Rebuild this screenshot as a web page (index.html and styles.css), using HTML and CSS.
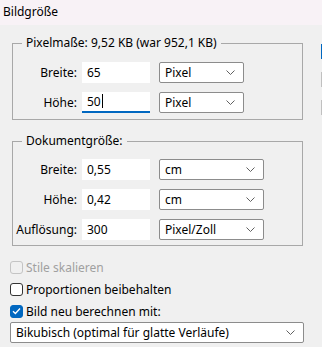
FILE: index.html
```
<!DOCTYPE html>
<html lang="de">
<head>
  <meta charset="UTF-8">
  <title>Bildgröße</title>
  <link rel="stylesheet" href="styles.css">
</head>
<body>
  <div class="titlebar">Bildgröße</div>

  <div class="dialog">
    <div class="main">
      <!-- Pixelmaße -->
      <fieldset class="group group-pixel">
        <legend>Pixelmaße: 9,52 KB (war 952,1 KB)</legend>
        <div class="row">
          <label class="lbl">Breite:</label>
          <div class="field">65</div>
          <div class="select">Pixel <svg class="chev" width="9" height="5" viewBox="0 0 9 5"><path d="M0.5 0.5 L4.5 4.5 L8.5 0.5"/></svg></div>
        </div>
        <div class="row">
          <label class="lbl">Höhe:</label>
          <div class="field focused">50<span class="caret"></span></div>
          <div class="select">Pixel <svg class="chev" width="9" height="5" viewBox="0 0 9 5"><path d="M0.5 0.5 L4.5 4.5 L8.5 0.5"/></svg></div>
        </div>
      </fieldset>

      <!-- Dokumentgröße -->
      <fieldset class="group group-doc">
        <legend>Dokumentgröße:</legend>
        <div class="row">
          <label class="lbl">Breite:</label>
          <div class="field">0,55</div>
          <div class="select wide">cm <svg class="chev" width="9" height="5" viewBox="0 0 9 5"><path d="M0.5 0.5 L4.5 4.5 L8.5 0.5"/></svg></div>
        </div>
        <div class="row">
          <label class="lbl">Höhe:</label>
          <div class="field">0,42</div>
          <div class="select wide">cm <svg class="chev" width="9" height="5" viewBox="0 0 9 5"><path d="M0.5 0.5 L4.5 4.5 L8.5 0.5"/></svg></div>
        </div>
        <div class="row">
          <label class="lbl">Auflösung:</label>
          <div class="field">300</div>
          <div class="select wide">Pixel/Zoll <svg class="chev" width="9" height="5" viewBox="0 0 9 5"><path d="M0.5 0.5 L4.5 4.5 L8.5 0.5"/></svg></div>
        </div>
      </fieldset>

      <div class="checks">
        <div class="check disabled"><span class="box"></span>Stile skalieren</div>
        <div class="check"><span class="box"></span>Proportionen beibehalten</div>
        <div class="check"><span class="box checked"><svg width="9" height="8" viewBox="0 0 9 8"><path d="M1 4.2 L3.4 6.5 L8 1.5"/></svg></span>Bild neu berechnen mit:</div>
      </div>

      <div class="select full">Bikubisch (optimal für glatte Verläufe) <svg class="chev" width="9" height="5" viewBox="0 0 9 5"><path d="M0.5 0.5 L4.5 4.5 L8.5 0.5"/></svg></div>
    </div>

    <!-- Buttons rechts, nur der linke Rand ist sichtbar -->
    <div class="side">
      <div class="btn primary"></div>
      <div class="btn"></div>
      <div class="btn"></div>
    </div>
  </div>
</body>
</html>
```

FILE: styles.css
```
html, body {
  margin: 0;
  padding: 0;
}
body {
  width: 322px;
  height: 347px;
  overflow: hidden;
  background-color: #f0f0f0;
  font-family: "Noto Sans", "Segoe UI", sans-serif;
  font-size: 12px;
  color: #000;
}
.titlebar {
  height: 25px;
  line-height: 24px;
  padding-left: 3px;
  background-color: #f8f2f6;
}
.dialog {
  display: flex;
}
.main {
  flex: 0 0 311px;
  padding-left: 10px;
}
.group {
  margin: 10px 0 0 2px;
  padding: 0 0 6px 0;
  width: 289px;
  border: 1px solid #a8a8a8;
}
.group legend {
  margin-left: 9px;
  padding: 0 4px;
  line-height: 16px;
}
.group-pixel .row:first-of-type {
  margin-top: 11px;
}
.group-doc {
  margin-top: 13px;
  padding-bottom: 5px;
}
.group-doc .row:first-of-type {
  margin-top: 10px;
}
.row {
  display: flex;
  align-items: center;
  height: 21px;
  margin-top: 9px;
}
.lbl {
  width: 64px;
  text-align: right;
}
.field {
  box-sizing: border-box;
  width: 68px;
  height: 21px;
  margin-left: 5px;
  padding-left: 5px;
  line-height: 21px;
  background-color: #fff;
}
.field.focused {
  border-bottom: 2px solid #0067c0;
  line-height: 20px;
}
.caret {
  display: inline-block;
  width: 1px;
  height: 14px;
  margin-left: 1px;
  vertical-align: -2px;
  background-color: #000;
}
.select {
  box-sizing: border-box;
  position: relative;
  width: 85px;
  height: 21px;
  margin-left: 9px;
  padding-left: 5px;
  line-height: 19px;
  background-color: #fff;
  border: 1px solid #8c8c8c;
  border-radius: 2px;
}
.select.wide {
  width: 105px;
}
.select.full {
  width: 294px;
  margin: 0;
}
.chev {
  position: absolute;
  right: 8px;
  top: 7px;
}
.chev path {
  fill: none;
  stroke: #606060;
  stroke-width: 1;
}
.checks {
  margin-top: 10px;
}
.check {
  display: flex;
  align-items: center;
  height: 22px;
}
.check.disabled {
  color: #a0a0a0;
}
.box {
  box-sizing: border-box;
  display: flex;
  align-items: center;
  justify-content: center;
  width: 13px;
  height: 13px;
  margin-right: 3px;
  border: 1px solid #333;
  border-radius: 3px;
  background-color: #fff;
}
.check.disabled .box {
  border-color: #c4c4c4;
  background-color: #f0f0f0;
}
.box.checked {
  border-color: #0067c0;
  background-color: #0067c0;
}
.box.checked path {
  fill: none;
  stroke: #fff;
  stroke-width: 1.3;
}
/* nur 1px breit: die Buttons sind am Rand abgeschnitten */
.side {
  flex: 0 0 1px;
  overflow: hidden;
  padding-top: 19px;
}
.btn {
  box-sizing: border-box;
  width: 1px;
  height: 15px;
  margin-bottom: 13px;
  background-color: #c0c0c0;
}
.btn.primary {
  background-color: #0067c0;
}
.btn + .btn + .btn {
  margin-top: 7px;
}
```
